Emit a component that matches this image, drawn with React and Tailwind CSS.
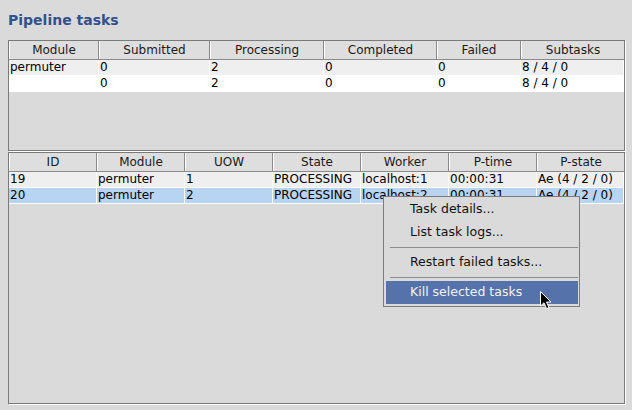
import React from 'react'

const summaryCols = [
    { name: "Module", w: "w-[90px]" },
    { name: "Submitted", w: "w-[111px]" },
    { name: "Processing", w: "w-[114px]" },
    { name: "Completed", w: "w-[113px]" },
    { name: "Failed", w: "w-[84px]" },
    { name: "Subtasks", w: "w-[103px]" },
];

const summaryRows = [
    ["permuter", "0", "2", "0", "0", "8 / 4 / 0"],
    ["", "0", "2", "0", "0", "8 / 4 / 0"],
];

const taskCols = [
    { name: "ID", w: "w-[88px]" },
    { name: "Module", w: "w-[88px]" },
    { name: "UOW", w: "w-[88px]" },
    { name: "State", w: "w-[88px]" },
    { name: "Worker", w: "w-[88px]" },
    { name: "P-time", w: "w-[88px]" },
    { name: "P-state", w: "w-[87px]" },
];

const taskRows = [
    ["19", "permuter", "1", "PROCESSING", "localhost:1", "00:00:31", "Ae (4 / 2 / 0)"],
    ["20", "permuter", "2", "PROCESSING", "localhost:2", "00:00:31", "Ae (4 / 2 / 0)"],
];

const Table = ({ cols, rows, selected, height }) => {
    return (
        <div className={`w-[617px] ${height} border border-[#7a7a7a] shadow-[1px_1px_0_#ffffff] bg-[#dadada] overflow-hidden`}>
            {/* header */}
            <div className="flex h-[19px] border-b border-[#8a8a8a]">
                {cols.map((c, i) => (
                    <div
                        key={i}
                        className={`${c.w} shrink-0 h-full flex items-center justify-center bg-[#dedede] border-l border-l-white ${i === cols.length - 1 ? "" : "border-r border-r-[#8a8a8a]"} text-[12px] leading-[15px] text-[#1a1a1a]`}
                    >
                        {c.name}
                    </div>
                ))}
            </div>
            {rows.map((r, ri) => (
                <div
                    key={ri}
                    className={`flex h-[16px] border-b border-b-white ${
                        selected === ri ? "bg-[#b8d4f3]" : ri % 2 === 0 ? "bg-[#efefef]" : "bg-white"
                    }`}
                >
                    {r.map((v, ci) => (
                        <div
                            key={ci}
                            className={`${cols[ci].w} shrink-0 h-full border-r border-r-white ${ci === 0 ? "pl-[1px]" : "pl-[1px]"} text-[12px] leading-[15px] text-black whitespace-nowrap overflow-hidden`}
                        >
                            {v}
                        </div>
                    ))}
                </div>
            ))}
        </div>
    )
}

const MenuItem = ({ label, active }) => (
    <div className={`h-[23px] flex items-center pl-[24px] text-[12.5px] ${active ? "bg-[#5672aa] text-[#f2f2f6]" : "text-[#111]"}`}>
        {label}
    </div>
)

const Separator = () => (
    <div className="h-[7px] flex items-center pl-[4px]">
        <div className="w-full h-px bg-[#8c8c8c]"></div>
    </div>
)

const App = () => {
    return (
        <div className="relative w-[632px] h-[410px] overflow-hidden bg-[#dadada] font-['DejaVu_Sans','Liberation_Sans',sans-serif]">
            <div className="pl-[8px] pt-[12px]">
                <div className="h-[16px] text-[14px] leading-[16px] font-bold text-[#34508e]">
                    Pipeline tasks
                </div>
                <div className="mt-[12px]">
                    <Table cols={summaryCols} rows={summaryRows} height="h-[111px]" />
                </div>
                <div className="mt-[1px]">
                    <Table cols={taskCols} rows={taskRows} selected={1} height="h-[252px]" />
                </div>
            </div>

            {/* context menu */}
            <div className="absolute left-[383px] top-[196px] w-[197px] border border-[#7c7c7c] bg-[#dadada] pl-[2px] pr-[1px] pt-[1px] pb-[2px]">
                <MenuItem label="Task details..." />
                <MenuItem label="List task logs..." />
                <Separator />
                <MenuItem label="Restart failed tasks..." />
                <Separator />
                <MenuItem label="Kill selected tasks" active />
            </div>

            {/* mouse pointer */}
            <svg className="absolute left-[540px] top-[291px]" width="14" height="20" viewBox="0 0 14 20">
                <path d="M0.5 0.5 L0.5 15 L4 11.8 L6.6 17.6 L9 16.6 L6.5 11 L11 11 Z" fill="#000" stroke="#fff" strokeWidth="1" strokeLinejoin="round" />
            </svg>
        </div>
    )
}

export default App;
